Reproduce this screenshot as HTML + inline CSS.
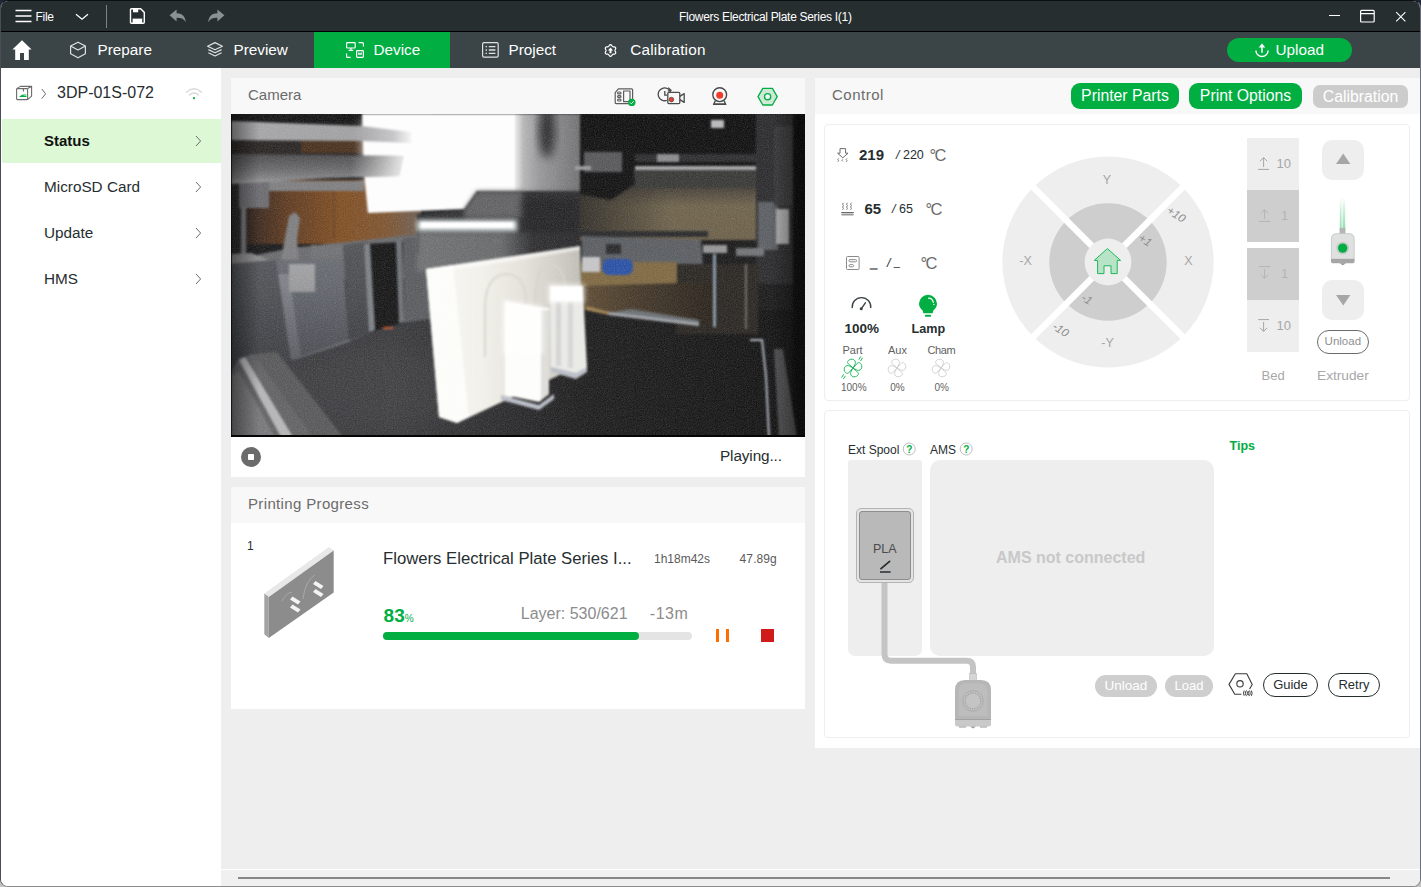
<!DOCTYPE html>
<html lang="en">
<head>
<meta charset="utf-8">
<title>Flowers Electrical Plate Series I(1)</title>
<style>
*{box-sizing:border-box;margin:0;padding:0}
html,body{width:1421px;height:887px;overflow:hidden;background:linear-gradient(#1d2536 0,#1d2536 50%,#c4c4c4 50%,#c4c4c4 100%);font-family:"Liberation Sans",sans-serif;color:#262e30}
.abs,.abs>*{position:absolute}
#win{position:absolute;left:0;top:0;width:1421px;height:887px;border-radius:8px;overflow:hidden;background:#eeeeee;border:1px solid #000;border-color:#0b0e12 #6d7078 #8c8c8c #4a4d58}
#win>*{position:absolute}
/* title bar */
#title{left:0;top:0;width:1419px;height:30px;background:#262e30;color:#fff}
#title>*{position:absolute}
#title .t{left:678px;top:8px;white-space:nowrap;font-size:12px;line-height:16px;letter-spacing:-.3px}
#tline{left:0;top:30px;width:1419px;height:1px;background:#000}
/* tab bar */
#tabs{left:0;top:31px;width:1419px;height:36px;background:#3b4446;color:#fff}
#tabs>*{position:absolute}
.tab{top:0;height:36px;font-size:15.3px;line-height:36px;white-space:nowrap}
.tab span{position:absolute;top:0}
.tab svg{position:absolute}
#tabdev{left:313px;width:136px;background:#00ae42}
#upload{left:1226px;top:6px;width:125px;height:24px;border-radius:12px;background:#00ae42;font-size:15.3px;line-height:24px}
/* sidebar */
#side{left:0;top:67px;width:220px;height:819px;background:#fff}
#side>*{position:absolute}
.srow{left:0;width:219px;height:44px;font-size:15.3px;line-height:44px;color:#262e30}
.srow span{position:absolute;left:43px;top:0}
.srow svg{position:absolute;left:194px;top:16px}
/* panels */
.hdr{background:#f8f8f8;color:#6b6b6b;font-size:15px;line-height:36px;height:36px}
.hdr>span{position:absolute;left:17px;top:-1px;white-space:nowrap}
.white{background:#fff}
.gbtn{position:absolute;height:24px;border-radius:12px;background:#00ae42;color:#fff;font-size:15.8px;line-height:24px;text-align:center;white-space:nowrap}
.box{border:1px solid #eeeeee;border-radius:4px;background:#fff}

#cp span{white-space:nowrap}
.tb{font-size:15px;line-height:20px;font-weight:bold;color:#262e30}
.tb13{font-size:13.500px;line-height:18px;font-weight:bold;color:#262e30}
.ts{font-size:12.500px;line-height:18px;color:#262e30}
.ts i{font-style:italic}
.tc{font-size:16.5px;line-height:22px;color:#6b6b6b;letter-spacing:-1.7px}
.fl{font-size:11px;line-height:14px;color:#5f5f5f}
.bn{font-size:13px;line-height:18px}
.cl{font-size:14px;line-height:18px;color:#a8a8a8}
.al{font-size:12px;line-height:16px;color:#262e30}
.pill{border-radius:12px;font-size:13px;text-align:center;white-space:nowrap}
.pill.ol{border:1px solid #262e30;color:#262e30;line-height:21.500px}
</style>
</head>
<body>
<div id="win">

<!-- ============ TITLE BAR ============ -->
<div id="title">
  <svg style="left:14px;top:8px" width="18" height="14" viewBox="0 0 18 14"><path d="M0.5 1.4H16.5M0.5 7H16.5M0.5 12.6H16.5" stroke="#fff" stroke-width="1.5" fill="none"/></svg>
  <div style="left:34.5px;top:8px;font-size:12px;line-height:16px;letter-spacing:-.3px">File</div>
  <svg style="left:74px;top:12px" width="14" height="8" viewBox="0 0 14 8"><path d="M1 1.2L7 6.2L13 1.2" stroke="#fff" stroke-width="1.3" fill="none"/></svg>
  <div style="left:105px;top:4px;width:1px;height:23px;background:#7d8385"></div>
  <!-- save -->
  <svg style="left:128px;top:6px" width="18" height="18" viewBox="0 0 18 18"><path d="M2.6 1.7H11.6L15.3 5.4V15.2Q15.3 16.3 14.2 16.3H2.6Q1.5 16.3 1.5 15.2V2.8Q1.5 1.7 2.6 1.7Z" fill="none" stroke="#fff" stroke-width="1.4"/><rect x="4" y="1.7" width="5.2" height="3.6" fill="#fff"/><rect x="3.6" y="11.6" width="9.6" height="4.7" fill="#fff"/></svg>
  <!-- undo -->
  <svg style="left:167.500px;top:8px" width="18" height="14" viewBox="0 0 18 14"><path d="M0.6 6.2L7.6 0.6V4.2C13 4.2 16.4 7.4 16.8 13.2C15 9.8 12 8.6 7.6 8.8V12.4Z" fill="#8b9193"/></svg>
  <!-- redo -->
  <svg style="left:205.500px;top:8px" width="18" height="14" viewBox="0 0 18 14"><path d="M17.4 6.2L10.4 0.6V4.2C5 4.2 1.6 7.4 1.2 13.2C3 9.8 6 8.6 10.4 8.8V12.4Z" fill="#8b9193"/></svg>
  <div class="t">Flowers Electrical Plate Series I(1)</div>
  <!-- window controls -->
  <div style="left:1328px;top:14px;width:11px;height:1.3px;background:#fff"></div>
  <svg style="left:1358px;top:8px" width="17" height="15" viewBox="0 0 17 15"><rect x="1.6" y="1.4" width="13.6" height="11.6" rx="1" fill="none" stroke="#fff" stroke-width="1.2"/><path d="M1.6 4.6H15.2" stroke="#fff" stroke-width="1.2"/></svg>
  <svg style="left:1394px;top:10px" width="12" height="12" viewBox="0 0 12 12"><path d="M1.2 1.2L10.4 10.4M10.4 1.2L1.2 10.4" stroke="#fff" stroke-width="1.1"/></svg>
</div>
<div id="tline"></div>

<!-- ============ TAB BAR ============ -->
<div id="tabs">
  <!-- home -->
  <svg style="left:10px;top:7px" width="22" height="22" viewBox="0 0 22 22"><path d="M11 1.2L20.6 10.4H17.8V21H13V14H9V21H4.2V10.4H1.4Z" fill="#fff"/></svg>
  <div class="tab" id="tabprep" style="left:51px;width:127px">
    <svg style="left:17px;top:9px" width="18" height="18" viewBox="0 0 18 18"><path d="M9 1.2L16.4 5V12.8L9 16.8L1.6 12.8V5Z M1.6 5L9 9L16.4 5" fill="none" stroke="#dfe2e3" stroke-width="1.2" stroke-linejoin="round"/></svg>
    <span style="left:45.5px">Prepare</span></div>
  <div class="tab" id="tabprev" style="left:178px;width:135px">
    <svg style="left:27px;top:9px" width="18" height="18" viewBox="0 0 18 18"><path d="M9 1.6L16.4 5.2L9 8.8L1.6 5.2Z M2.4 8.6L9 11.8L15.6 8.6 M2.4 11.8L9 15L15.6 11.8" fill="none" stroke="#dfe2e3" stroke-width="1.2" stroke-linejoin="round"/></svg>
    <span style="left:54.5px">Preview</span></div>
  <div class="tab" id="tabdev">
    <svg style="left:31px;top:9px" width="20" height="18" viewBox="0 0 20 18"><g fill="none" stroke="#fff" stroke-width="1.2"><rect x="1.6" y="1.6" width="8.6" height="5.4" rx=".8"/><path d="M5.9 7V9.2M3.6 9.4H8.2"/><path d="M13.6 1.6H17.4Q18.4 1.6 18.4 2.6V5.4"/><path d="M1.6 12.6V15.4Q1.6 16.4 2.6 16.4H5.6"/><rect x="11.6" y="9.6" width="6.8" height="6.8" rx=".8"/><path d="M13.8 11.4V13.2H16.2V11.4"/></g></svg>
    <span style="left:59.5px">Device</span></div>
  <div class="tab" id="tabproj" style="left:449px;width:136px">
    <svg style="left:31px;top:9px" width="19" height="18" viewBox="0 0 19 18"><rect x="1.6" y="1.6" width="15.6" height="14.6" rx="1.4" fill="none" stroke="#dfe2e3" stroke-width="1.2"/><path d="M4.6 5.6H6M7.8 5.6H14.4M4.6 9H6M7.8 9H14.4M4.6 12.4H6M7.8 12.4H14.4" stroke="#dfe2e3" stroke-width="1.3"/></svg>
    <span style="left:58.5px">Project</span></div>
  <div class="tab" id="tabcal" style="left:585px;width:140px;letter-spacing:.2px">
    <svg style="left:17.400px;top:10.500px" width="15" height="15" viewBox="0 0 15 15"><path d="M7.50 1.65L8.00 1.77L8.46 2.08L8.83 2.53L9.14 2.99L9.42 3.38L9.72 3.65L10.11 3.78L10.59 3.82L11.14 3.86L11.71 3.96L12.22 4.20L12.57 4.57L12.72 5.07L12.67 5.62L12.47 6.17L12.23 6.67L12.03 7.10L11.95 7.50L12.03 7.90L12.23 8.33L12.47 8.83L12.67 9.38L12.72 9.93L12.57 10.42L12.22 10.80L11.71 11.04L11.14 11.14L10.59 11.18L10.11 11.22L9.73 11.35L9.42 11.62L9.14 12.01L8.83 12.47L8.46 12.92L8.00 13.23L7.50 13.35L7.00 13.23L6.54 12.92L6.17 12.47L5.86 12.01L5.58 11.62L5.27 11.35L4.89 11.22L4.41 11.18L3.86 11.14L3.29 11.04L2.78 10.80L2.43 10.43L2.28 9.93L2.33 9.38L2.53 8.83L2.77 8.33L2.97 7.90L3.05 7.50L2.97 7.10L2.77 6.67L2.53 6.17L2.33 5.62L2.28 5.07L2.43 4.58L2.78 4.20L3.29 3.96L3.86 3.86L4.41 3.82L4.89 3.78L5.28 3.65L5.58 3.38L5.86 2.99L6.17 2.53L6.54 2.08L7.00 1.77Z" fill="none" stroke="#fff" stroke-width="1.250" stroke-linejoin="round"/><path d="M7.500 4.400L10.100 7.400H8.500V10.300H6.500V7.400H4.900Z" fill="#fff"/></svg>
    <span style="left:44.300px">Calibration</span></div>
  <div id="upload">
    <svg style="position:absolute;left:27px;top:4px" width="16" height="16" viewBox="0 0 16 16"><path d="M8 10.800V4.500" stroke="#fff" stroke-width="1.500" fill="none"/><path d="M8 1.400L11.300 5.400H4.700Z" fill="#fff"/><path d="M1.900 8.400A6.100 6.100 0 0 0 14.100 8.400" fill="none" stroke="#fff" stroke-width="1.400"/></svg>
    <span style="position:absolute;left:48.5px;top:0">Upload</span></div>
</div>

<!-- ============ SIDEBAR ============ -->
<div id="side">
  <svg style="left:14px;top:17px" width="18" height="16" viewBox="0 0 18 16"><g fill="none" stroke="#6b6b6b" stroke-width="1.1" stroke-linejoin="round"><rect x="1.6" y="3.6" width="11" height="11" rx=".8"/><path d="M1.8 3.6L5.4 1.4H16.6V11.2L12.6 14.6M12.6 3.6L16.6 1.4M8.4 3.8V6.4"/></g><path d="M4 12L6.2 10.2Q7.2 9.4 8.4 9.4H11.4V10.4H8.6V11H11.4V12Z" fill="#00ae42"/></svg>
  <svg style="left:40px;top:19.500px" width="6" height="12" viewBox="0 0 6 12"><path d="M.8 1L4.6 5.8L.8 10.6" fill="none" stroke="#6b6b6b" stroke-width="1"/></svg>
  <div id="devname" style="left:56px;top:15px;font-size:16px;line-height:20px;white-space:nowrap">3DP-01S-072</div>
  <svg style="left:184px;top:19px" width="18" height="13" viewBox="0 0 18 13"><g fill="none" stroke="#d9d9d9" stroke-width="1.3" stroke-linecap="round"><path d="M1.4 5.2Q9 -1.6 16.6 5.2"/><path d="M4.4 8Q9 4 13.6 8"/></g><circle cx="9" cy="11.2" r="1.1" fill="#00ae42"/></svg>
  <div class="srow" style="top:51px;left:1px;width:219px;background:#dcf8d4;font-weight:bold;font-size:15px;color:#111"><span style="left:42px">Status</span><svg style="left:193px" width="7" height="12" viewBox="0 0 7 12"><path d="M1 1L5.6 6L1 11" fill="none" stroke="#6b6b6b" stroke-width="1"/></svg></div>
  <div class="srow" style="top:97px"><span>MicroSD Card</span><svg width="7" height="12" viewBox="0 0 7 12"><path d="M1 1L5.6 6L1 11" fill="none" stroke="#6b6b6b" stroke-width="1"/></svg></div>
  <div class="srow" style="top:143px"><span>Update</span><svg width="7" height="12" viewBox="0 0 7 12"><path d="M1 1L5.6 6L1 11" fill="none" stroke="#6b6b6b" stroke-width="1"/></svg></div>
  <div class="srow" style="top:189px"><span>HMS</span><svg width="7" height="12" viewBox="0 0 7 12"><path d="M1 1L5.6 6L1 11" fill="none" stroke="#6b6b6b" stroke-width="1"/></svg></div>
</div>

<!-- ============ CAMERA PANEL ============ -->
<div id="camhdr" class="hdr" style="left:230px;top:77px;width:574px"><span>Camera</span>
  <!-- sd card -->
  <svg style="position:absolute;left:382px;top:8.5px" width="24" height="20" viewBox="0 0 24 20"><g fill="none" stroke="#5c5c5c" stroke-width="1.2" stroke-linejoin="round"><path d="M5.4 1.8H18.6Q19.6 1.8 19.6 2.8V15.6Q19.6 16.6 18.6 16.6H3.2Q2.2 16.6 2.2 15.6V5.6Z"/><rect x="10.6" y="4" width="6.4" height="10.6"/><rect x="4.6" y="5" width="3.4" height="1.8" rx=".9"/><rect x="4.6" y="8.6" width="3.4" height="1.8" rx=".9"/><rect x="4.6" y="12.2" width="3.4" height="1.8" rx=".9"/></g><circle cx="18.800" cy="15.400" r="3.700" fill="#00ae42"/><path d="M17 15.500L18.300 16.800L20.600 14.300" fill="none" stroke="#fff" stroke-width="1"/></svg>
  <!-- timelapse -->
  <svg style="position:absolute;left:425px;top:7.5px" width="30" height="20" viewBox="0 0 30 20"><g fill="none" stroke="#4a4a4a" stroke-width="1.3"><path d="M10.800 14.300A6.400 6.400 0 1 1 14.600 6.200"/><path d="M12.200 1.600L14.900 4.300L11.800 5.200"/><path d="M8.800 5V9.200H11"/><rect x="11.800" y="6.400" width="12" height="11.200" rx="1"/><path d="M23.800 10.400L28.200 7.600V16.400L23.800 13.600" stroke-linejoin="round"/></g><circle cx="15.400" cy="13.600" r="2.300" fill="#ef3b2c" stroke="#4a4a4a" stroke-width=".8"/></svg>
  <!-- webcam -->
  <svg style="position:absolute;left:479px;top:7.5px" width="20" height="20" viewBox="0 0 20 20"><g fill="none" stroke="#4a4a4a" stroke-width="1.4"><circle cx="9.700" cy="8.700" r="6.900"/><path d="M5.400 14.400L3.800 18.300H15.600L14 14.400"/></g><path d="M3.400 18.300H16" stroke="#4a4a4a" stroke-width="1.500"/><circle cx="9.700" cy="9.300" r="3.500" fill="#ef3b2c"/></svg>
  <!-- hexagon -->
  <svg style="position:absolute;left:525px;top:7.5px" width="24" height="22" viewBox="0 0 24 22"><path d="M2 10.700L6.800 2.400H16.400L21.200 10.700L16.400 19H6.800Z" fill="#cfe9d7" stroke="#00ae42" stroke-width="1.300" stroke-linejoin="round"/><circle cx="11.600" cy="10.700" r="3.100" fill="#eef8f1" stroke="#00ae42" stroke-width="1.300"/></svg>
</div>
<div id="cam" style="left:230px;top:113px;width:574px;height:323px;background:#333">
<svg width="574" height="323" viewBox="0 0 574 323" style="position:absolute;left:0;top:0">
<defs>
  <filter color-interpolation-filters="sRGB" id="fb1" x="-5%" y="-5%" width="110%" height="110%"><feGaussianBlur stdDeviation="0.9"/></filter>
  <filter color-interpolation-filters="sRGB" id="fb2" x="-20%" y="-20%" width="140%" height="140%"><feGaussianBlur stdDeviation="2.2"/></filter>
  <filter color-interpolation-filters="sRGB" id="fb4" x="-30%" y="-30%" width="160%" height="160%"><feGaussianBlur stdDeviation="5"/></filter>
  <filter color-interpolation-filters="sRGB" id="fb9" x="-40%" y="-40%" width="180%" height="180%"><feGaussianBlur stdDeviation="12"/></filter>
  <filter color-interpolation-filters="sRGB" id="grain" x="0" y="0" width="100%" height="100%">
    <feTurbulence type="fractalNoise" baseFrequency="0.9" numOctaves="2" seed="7" result="n"/>
    <feColorMatrix in="n" type="matrix" values="0 0 0 0 1  0 0 0 0 1  0 0 0 0 1  0.9 0.9 0.9 0 -1.05"/>
  </filter>
  <linearGradient id="gFloor" x1="0" y1="0" x2="1" y2="0">
    <stop offset="0" stop-color="#363639"/><stop offset=".28" stop-color="#3b3b3e"/><stop offset=".5" stop-color="#29282a"/><stop offset=".62" stop-color="#1f1e1f"/><stop offset="1" stop-color="#141314"/>
  </linearGradient>
  <linearGradient id="gBeam1" x1="0" y1="0" x2="1" y2="0">
    <stop offset="0" stop-color="#a6a6a8"/><stop offset=".68" stop-color="#a0a0a2"/><stop offset=".9" stop-color="#c4c4c6"/><stop offset="1" stop-color="#f4f4f4"/>
  </linearGradient>
  <linearGradient id="gBeam2" x1="0" y1="0" x2="0" y2="1">
    <stop offset="0" stop-color="#4c4c4e"/><stop offset=".5" stop-color="#69696b"/><stop offset=".8" stop-color="#828284"/><stop offset="1" stop-color="#a2a2a4"/>
  </linearGradient>
  <linearGradient id="gPeg" x1="0" y1="0" x2="1" y2="0">
    <stop offset="0" stop-color="#2a211d"/><stop offset=".25" stop-color="#5e3b22"/><stop offset=".55" stop-color="#804f24"/><stop offset=".8" stop-color="#7e5430"/><stop offset="1" stop-color="#6e6056"/>
  </linearGradient>
  <linearGradient id="gFadeW" x1="0" y1="0" x2="1" y2="0">
    <stop offset="0" stop-color="#fff" stop-opacity="0"/><stop offset="1" stop-color="#fff" stop-opacity=".85"/>
  </linearGradient>
  <linearGradient id="gPlat" x1="0" y1="0" x2="1" y2="0">
    <stop offset="0" stop-color="#5e4c34"/><stop offset=".45" stop-color="#433729"/><stop offset="1" stop-color="#29231c"/>
  </linearGradient>
  <linearGradient id="gShadowL" x1="0" y1="0" x2="1" y2="0">
    <stop offset="0" stop-color="#2e2b27" stop-opacity=".9"/><stop offset="1" stop-color="#2e2b27" stop-opacity="0"/>
  </linearGradient>
  <linearGradient id="gVig" x1="0" y1="0" x2="1" y2="0">
    <stop offset="0" stop-color="#000" stop-opacity=".45"/><stop offset=".05" stop-color="#000" stop-opacity="0"/><stop offset=".94" stop-color="#000" stop-opacity="0"/><stop offset="1" stop-color="#000" stop-opacity=".5"/>
  </linearGradient>
  <linearGradient id="gCyl" x1="0" y1="0" x2="1" y2="0">
    <stop offset="0" stop-color="#e8e8e8"/><stop offset=".2" stop-color="#b4b4b5"/><stop offset=".4" stop-color="#98989a"/><stop offset="1" stop-color="#6e6e70"/>
  </linearGradient>
  <linearGradient id="gW2" x1="0" y1="0" x2="1" y2="0">
    <stop offset="0" stop-color="#fdfdfd"/><stop offset="1" stop-color="#fdfdfd" stop-opacity="0"/>
  </linearGradient>
  <linearGradient id="gUnder" x1="0" y1="0" x2="1" y2="0">
    <stop offset="0" stop-color="#707173"/><stop offset=".5" stop-color="#68696b"/><stop offset=".68" stop-color="#2e2e30"/><stop offset="1" stop-color="#2a2a2c"/>
  </linearGradient>
  <linearGradient id="gWall" x1="0" y1="0" x2="1" y2="0">
    <stop offset="0" stop-color="#f8f7f3"/><stop offset=".35" stop-color="#f1f0ea"/><stop offset=".62" stop-color="#e3e1d9"/><stop offset=".85" stop-color="#cdcbc2"/><stop offset="1" stop-color="#bcbab1"/>
  </linearGradient>
  <linearGradient id="gDarkV" x1="0" y1="0" x2="0" y2="1">
    <stop offset="0" stop-color="#1a1c20" stop-opacity="0"/><stop offset=".35" stop-color="#1a1c20" stop-opacity=".12"/><stop offset="1" stop-color="#1a1c20" stop-opacity=".5"/>
  </linearGradient>
  <linearGradient id="gSlab" x1="0" y1="0" x2="1" y2="0">
    <stop offset="0" stop-color="#fbfaf4"/><stop offset=".5" stop-color="#f1efe6"/><stop offset="1" stop-color="#dcdad2"/>
  </linearGradient>
  <linearGradient id="gTan" x1="0" y1="0" x2="0" y2="1">
    <stop offset="0" stop-color="#48423a"/><stop offset=".35" stop-color="#6e634c"/><stop offset="1" stop-color="#6c604a"/>
  </linearGradient>
</defs>
<rect width="574" height="323" fill="#1b1b1c"/>
<g filter="url(#fb1)">
  <!-- ===== floor ===== -->
  <rect x="0" y="196" width="574" height="127" fill="url(#gFloor)"/>
  <ellipse cx="140" cy="272" rx="110" ry="40" fill="#48484b" opacity=".4" filter="url(#fb9)"/>
  <!-- ===== top-left: beams + pegboard ===== -->
  <rect x="0" y="0" width="135" height="8" fill="#151515"/>
  <rect x="0" y="24" width="140" height="18" fill="#2a2624"/>
  <rect x="70" y="27" width="65" height="12" fill="#4a321e"/>
  <rect x="10" y="66" width="180" height="64" fill="url(#gPeg)"/>
  <rect x="102" y="74" width="2" height="50" fill="#6a4424"/>
  <rect x="0" y="66" width="16" height="80" fill="#262628"/>
  <rect x="8" y="66" width="30" height="28" fill="#6c6c70"/>
  <rect x="10" y="92" width="5" height="48" fill="#77777a"/>
  <rect x="38" y="67" width="95" height="10" fill="#7e7e80"/>
  <!-- grey counter strip -->
  <polygon points="0,146 60,134 180,121 190,121 190,165 0,165" fill="#696a6d"/>
  <polygon points="0,140 20,139 38,146 0,150" fill="#8c8c8e"/>
  <!-- lever -->
  <polygon points="58,102 64,98 69,104 66,126 68,146 50,146 54,124" fill="#7e7e80"/>
  <!-- small light cylinder -->
  <rect x="90" y="133" width="9" height="8" rx="3" fill="#dfe6ee"/>
  <!-- ===== left wall + grey pillars ===== -->
  <polygon points="0,150 48,146 48,162 60,246 0,262" fill="#5a5c61"/>
  <polygon points="0,150 48,146 56,244 22,240 0,250" fill="#56585d"/>
  <polygon points="45,147 112,143 118,228 62,246" fill="#6c6f76"/>
  <polygon points="47,160 58,160 70,242 60,246" fill="#888b92"/>
  <rect x="58" y="150" width="26" height="28" fill="#a9a9ab"/>
  <polygon points="112,131 136,128 140,218 118,228" fill="#525357"/>
  <rect x="80" y="131" width="32" height="16" fill="#707174"/>
  <polygon points="0,150 120,140 200,125 200,205 140,218 60,246 0,262" fill="url(#gDarkV)"/>
  <!-- dark opening -->
  <polygon points="133,130 172,128 172,208 142,217" fill="#171718"/>
  <polygon points="133,130 139,130 144,216 138,218" fill="#7c8085"/>
  <polygon points="165,128 171,128 173,208 168,209" fill="#6e7277"/>
  <polygon points="172,124 198,122 200,205 173,209" fill="#5a5b5e"/>
  <rect x="152" y="213" width="10" height="2" fill="#c8552a"/>
  <!-- bottom-left curved rail -->
  <polygon points="20,240 46,238 112,323 80,323" fill="#58585a"/>
  <polygon points="0,258 8,244 22,240 82,323 0,323" fill="#626265"/>
  <polygon points="8,246 14,243 62,323 50,323" fill="#b4b4b6"/>
  <polygon points="0,262 8,258 44,323 0,323" fill="#77777a"/>
  <!-- ===== white blown-out area ===== -->
  <rect x="278" y="0" width="74" height="79" fill="url(#gCyl)"/>
  <polygon points="131,0 284,0 284,77 246,77 233,95 137,99 133,60" fill="#fdfdfd"/>
  <rect x="276" y="0" width="16" height="77" fill="url(#gW2)"/>
  <polygon points="131,6 200,4 200,66 131,64" fill="#fdfdfd" opacity=".75" filter="url(#fb4)"/>
  <polygon points="0,7 130,12 180,18 180,29 130,27 0,26" fill="url(#gBeam1)"/>
  <polygon points="0,40 172,42 168,62 100,64 0,70" fill="url(#gBeam2)"/>
  <polygon points="120,42 172,42 168,62 120,63" fill="url(#gFadeW)"/>
  <ellipse cx="316" cy="17" rx="8" ry="27" fill="#2c2c2e" filter="url(#fb4)"/>
  <!-- under white: toolhead body -->
  <polygon points="246,77 350,77 350,140 186,140 186,100 233,96" fill="#323234"/>
  <polygon points="246,77 292,77 292,104 233,104 233,96" fill="#626264" filter="url(#fb2)"/>
  <rect x="292" y="82" width="58" height="54" fill="#252527" filter="url(#fb4)"/>
  <rect x="186" y="118" width="170" height="40" fill="url(#gUnder)" filter="url(#fb2)"/>
  <rect x="186" y="106" width="100" height="11" fill="#e4ecec" filter="url(#fb2)"/>
  <rect x="190" y="108" width="92" height="6" fill="#ffffff"/>
  <!-- ===== top-right: machine ===== -->
  <rect x="349" y="0" width="225" height="60" fill="#111112"/>
  <rect x="349" y="56" width="180" height="22" fill="#393937"/>
  <rect x="349" y="74" width="180" height="52" fill="url(#gTan)"/>
  <rect x="349" y="74" width="90" height="48" fill="url(#gShadowL)"/>
  <polygon points="349,20 400,24 404,70 380,86 349,80" fill="#131314"/>
  <rect x="353" y="38" width="38" height="20" fill="#58585a"/>
  <rect x="344" y="52" width="16" height="4" fill="#9a9a9c"/>
  <rect x="404" y="40" width="130" height="8" fill="#2e2e30"/>
  <rect x="426" y="40" width="22" height="8" fill="#8a8a8c"/>
  <rect x="404" y="52" width="136" height="4" fill="#a4a4a6"/>
  <rect x="480" y="6" width="13" height="8" fill="#b8b8ba"/>
  <!-- right column -->
  <rect x="525" y="0" width="49" height="170" fill="#2c2c2e"/>
  <rect x="527" y="88" width="20" height="48" fill="#5b5e62"/>
  <rect x="545" y="95" width="13" height="35" fill="#adadaf"/>
  <rect x="543" y="12" width="20" height="80" fill="#3a3a3c"/>
  <rect x="562" y="0" width="12" height="323" fill="#0c0c0d"/>
  <!-- bed plate -->
  <rect x="349" y="117" width="128" height="6" fill="#2a2a2c"/>
  <polygon points="351,122 470,126 472,152 351,150" fill="#5a5d61"/>
  <rect x="472" y="131" width="24" height="8" fill="#949496"/>
  <rect x="505" y="134" width="28" height="8" fill="#707274"/>
  <rect x="375" y="130" width="15" height="10" fill="#2a2a2c"/>
  <!-- below bed: cardboard + platform -->
  <rect x="445" y="150" width="82" height="70" fill="#2a2723"/>
  <rect x="350" y="148" width="96" height="28" fill="#7e6842"/>
  <polygon points="352,172 482,168 482,212 352,196" fill="url(#gPlat)"/>
  <polygon points="355,192 378,198 378,201 355,196" fill="#a08250"/>
  <polygon points="377,199 400,195 468,206 468,211" fill="#6b6f73"/>
  <polygon points="377,198 468,209 468,212 377,201" fill="#a2a6aa"/>
  <rect x="351" y="143" width="18" height="15" fill="#c4c4c6"/>
  <rect x="371" y="145" width="31" height="16" rx="7" fill="#2a50a4"/>
  <rect x="482" y="140" width="3" height="73" fill="#8796a6"/>
  <rect x="514" y="150" width="2" height="65" fill="#6a6a62"/>
  <!-- right floor edge -->
  <polyline points="519,226 531,226 535,262 538,323" fill="none" stroke="#a9b1bb" stroke-width="2"/>
  <polygon points="543,235 552,235 566,323 548,323" fill="#505052"/>
  <!-- ===== white printed parts ===== -->
  <polygon points="195,155 349,132 352,250 226,309 208,303" fill="url(#gWall)"/>
  <polygon points="195,155 222,151 238,303 226,309 208,303" fill="#fcfcf9"/>
  <polygon points="195,155 282,142.500 349,132 349,136 282,147 222,156" fill="#ffffff" opacity=".55"/>
  <path d="M254,243 V192 Q255,161 275,160 Q295,160 295,190 V200" fill="none" stroke="#d9d7cf" stroke-width="2.200"/>
  <path d="M304,196 V182 Q305,152 320,151 Q334,151 334,178" fill="none" stroke="#d4d2ca" stroke-width="2"/>
  <!-- second small piece (back) -->
  <polygon points="319,173 352,176 356,254 345,260 320,254" fill="#e9e9e6"/>
  <rect x="325" y="188" width="5" height="64" fill="#d3d3d1"/>
  <rect x="337" y="188" width="5" height="66" fill="#d5d5d3"/>
  <polygon points="320,253 345,259 356,253 356,258 345,265 320,258" fill="#b8bcc4"/>
  <rect x="319" y="172" width="33" height="15" fill="#ffffff"/>
  <rect x="317" y="170" width="37" height="19" fill="#ffffff" opacity=".6" filter="url(#fb2)"/>
  <!-- front small piece -->
  <polygon points="274,187 310,193.500 318,194 318,280 308,288 274,281" fill="#fdfdfb"/>
  <polygon points="310,196 318,196 318,280 310,286" fill="#dddcd8"/>
  <polygon points="272,186 312,192 312,240 272,240" fill="#ffffff" opacity=".7" filter="url(#fb2)"/>
  <polygon points="270,281 308,291 323,280 323,285 308,296 270,286" fill="#b9bdc6"/>
</g>
<rect width="574" height="323" filter="url(#grain)" opacity=".16"/>
<rect width="574" height="323" fill="url(#gVig)"/>
<rect x="0" y="321" width="574" height="2" fill="#050505"/>
<rect x="0" y="0" width="1" height="323" fill="#050505" opacity=".6"/>
</svg>
</div>
<div id="camft" class="white" style="left:230px;top:436px;width:574px;height:40px">
  <div style="position:absolute;left:10px;top:10px;width:20px;height:20px;border-radius:10px;background:#6b6b6b"></div>
  <div style="position:absolute;left:16.800px;top:16.900px;width:6.400px;height:6.400px;border-radius:.8px;background:#fff"></div>
  <span id="playing" style="position:absolute;left:489px;top:9px;font-size:15.3px;line-height:20px;letter-spacing:-.1px;white-space:nowrap">Playing...</span>
</div>

<!-- ============ PRINTING PROGRESS ============ -->
<div id="pphdr" class="hdr" style="left:230px;top:486px;width:574px"><span style="letter-spacing:.35px">Printing Progress</span></div>
<div id="pp" class="white" style="left:230px;top:522px;width:574px;height:186px"><div class="abs" style="position:absolute;left:-1px;top:-1px;width:574px;height:186px">
  <span id="ppnum" style="left:17px;top:17px;font-size:12px;line-height:14px">1</span>
  <!-- thumbnail -->
  <svg style="left:29px;top:21px" width="82" height="100" viewBox="0 0 82 100"><polygon points="5.300,50.400 70,4 74.700,7.600 9.800,54" fill="#e8e8e8"/><polygon points="5.300,50.400 9.800,54 9.800,94.900 5.300,91.200" fill="#a3a3a3"/><polygon points="9.800,54 74.700,7.600 74.700,49.400 9.800,94.900" fill="#8c8c8c"/><g fill="#f4f4f4"><polygon points="31,56.500 33.500,53.500 41.500,58.500 39,61.500"/><polygon points="31,64.500 33.500,61.500 41.500,66.500 39,69.500"/><polygon points="54,41 56.500,38 64.500,43 62,46"/><polygon points="54,49 56.500,46 64.500,51 62,54"/></g><g fill="none" stroke="#b4b4b4" stroke-width=".7"><path d="M23 58Q27 50 33 49"/><path d="M44 56Q46 38 56 32"/></g></svg>
  <span id="pptitle" style="left:153px;top:26px;font-size:16.7px;line-height:22px;white-space:nowrap;color:#262e30">Flowers Electrical Plate Series I...</span>
  <span id="pptime" style="left:424px;top:29px;font-size:12px;line-height:16px;white-space:nowrap;color:#5a5a5a">1h18m42s</span>
  <span id="ppwt" style="left:509.600px;letter-spacing:.1px;top:29px;font-size:12px;line-height:16px;white-space:nowrap;color:#5a5a5a">47.89g</span>
  <span id="pppct" style="left:153.600px;top:83px;font-size:19px;line-height:22px;font-weight:bold;color:#00ae42;white-space:nowrap">83<span style="font-size:10px;font-weight:normal;position:static">%</span></span>
  <span id="pplayer" style="left:290.800px;top:81px;font-size:16px;line-height:22px;color:#8c8c8c;white-space:nowrap">Layer: 530/621</span>
  <span id="ppleft" style="letter-spacing:.5px;left:419.800px;top:81px;font-size:16px;line-height:22px;color:#8c8c8c;white-space:nowrap">-13m</span>
  <div style="left:153px;top:110px;width:309px;height:8px;border-radius:4px;background:#e4e4e4"></div>
  <div style="left:153px;top:110px;width:256px;height:8px;border-radius:4px;background:#00ae42"></div>
  <div style="left:486px;top:107.400px;width:3.100px;height:12.600px;background:#ff6f00"></div>
  <div style="left:496.300px;top:107.400px;width:3.100px;height:12.600px;background:#ff6f00"></div>
  <div style="left:530.600px;top:107.400px;width:13.100px;height:12.600px;background:#d01b1b"></div>
</div></div>

<!-- ============ CONTROL PANEL ============ -->
<div id="ctl" class="white" style="left:814px;top:77px;width:605px;height:670px"></div>
<div id="ctlhdr" class="hdr" style="left:814px;top:77px;width:605px"><span style="letter-spacing:.5px">Control</span>
  <div class="gbtn" id="bpp" style="left:256px;top:5px;width:108px;height:26px;line-height:26px;border-radius:9px">Printer Parts</div>
  <div class="gbtn" id="bpo" style="left:374px;top:5px;width:113px;height:26px;line-height:26px;border-radius:9px">Print Options</div>
  <div class="gbtn" id="bcal" style="left:498px;top:6.500px;width:95px;height:23.500px;line-height:23px;border-radius:7px;background:#cccccc">Calibration</div>
</div>
<div id="box1" class="box" style="left:823px;top:123px;width:586px;height:277px"></div>
<div id="box2" class="box" style="left:823px;top:409px;width:586px;height:328px"></div>

<div id="cp" class="abs" style="left:-1px;top:-1px;width:1421px;height:887px">
  <!-- temperatures -->
  <svg style="left:836px;top:147px" width="14" height="16" viewBox="0 0 14 16"><g fill="none" stroke="#6b6b6b" stroke-width="1"><path d="M4 1.600H9.600V6.200H12L6.800 10.800L1.600 6.200H4Z" stroke-linejoin="round"/><path d="M2.600 11.400L1.800 12.600L2.600 13.600L1.800 14.800M6.800 12.400L6 13.400L6.800 14.400M11 11.400L10.200 12.600L11 13.600L10.200 14.800" stroke-width=".9"/></g></svg>
  <span id="t1a" class="tb" style="left:859px;top:145px">219</span>
  <span id="t1b" class="ts" style="left:896px;top:146px"><i>/</i> 220</span>
  <span id="t1c" class="tc" style="left:929.500px;top:143.500px">&#176;C</span>
  <svg style="left:840px;top:201px" width="15" height="16" viewBox="0 0 15 16"><g fill="none" stroke="#6b6b6b" stroke-width=".9"><path d="M3.400 1.800L2.600 3.200L3.400 4.600L2.600 6L3.400 7.400L2.600 8.800M7.400 1.800L6.600 3.200L7.400 4.600L6.600 6L7.400 7.400L6.600 8.800M11.400 1.800L10.600 3.200L11.400 4.600L10.600 6L11.400 7.400L10.600 8.800"/></g><rect x="1.200" y="11" width="12.600" height="1" fill="#6b6b6b"/><rect x="1.200" y="12.600" width="12.600" height="2" rx="1" fill="#9a9a9a"/></svg>
  <span id="t2a" class="tb" style="left:864.500px;top:199px">65</span>
  <span id="t2b" class="ts" style="left:892px;top:200px"><i>/</i> 65</span>
  <span id="t2c" class="tc" style="left:925.500px;top:197.500px">&#176;C</span>
  <svg style="left:845px;top:255px" width="16" height="16" viewBox="0 0 16 16"><g fill="none" stroke="#8a8a8a" stroke-width="1"><rect x="1.500" y="1.500" width="12.600" height="13" rx="1"/><rect x="4" y="4.600" width="7.600" height="2.200" rx="1.100"/><rect x="4" y="9.600" width="4.600" height="2.200" rx="1.100"/></g></svg>
  <span id="t3a" class="tb" style="left:869.800px;top:252px;font-size:14px;text-shadow:0 .9px 0 #262e30">_</span>
  <span id="t3b" class="ts" style="left:887px;top:254px"><i>/</i></span>
  <span id="t3d" class="ts" style="left:893.800px;top:253px;font-size:11px">_</span>
  <span id="t3c" class="tc" style="left:920.500px;top:251.500px">&#176;C</span>

  <!-- speed + lamp -->
  <svg style="left:850px;top:294px" width="23" height="18" viewBox="0 0 23 18"><path d="M2.300 14.200A9.300 9.300 0 1 1 20.700 14.200" fill="none" stroke="#3a4244" stroke-width="1.300"/><path d="M4.700 13.800A6.900 6.900 0 0 1 18.300 13.800" fill="none" stroke="#3a4244" stroke-width=".7" opacity=".0"/><path d="M11 15.200L15.400 8.800" stroke="#3a4244" stroke-width="1.400" stroke-linecap="round"/><circle cx="11.200" cy="14.800" r="1.500" fill="#3a4244"/></svg>
  <span id="spd" class="tb13" style="left:844.500px;top:320px">100%</span>
  <svg style="left:917px;top:293px" width="22" height="26" viewBox="0 0 22 26"><path d="M11 1.800A9 9 0 0 1 20 10.800C20 14 18 15.800 16.400 17.600L15.600 20.200H6.400L5.600 17.600C4 15.800 2 14 2 10.800A9 9 0 0 1 11 1.800Z" fill="#00ae42"/><rect x="7.800" y="21.800" width="6.400" height="2" rx="1" fill="#00ae42"/><path d="M11.600 5.200Q15.400 5.400 16.400 9.400" fill="none" stroke="#fff" stroke-width="1.200" stroke-linecap="round"/><circle cx="16.800" cy="11.400" r=".7" fill="#fff"/></svg>
  <span id="lamp" class="tb13" style="left:911.500px;top:320px;font-size:12.6px">Lamp</span>

  <!-- fans -->
  <span id="f1l" class="fl" style="left:842.500px;top:343px">Part</span>
  <span id="f2l" class="fl" style="left:888px;top:343px">Aux</span>
  <span id="f3l" class="fl" style="left:927.500px;top:343px;letter-spacing:-.4px">Cham</span>
  <svg style="left:841px;top:355.500px" width="24" height="24" viewBox="-2 -2 24 24"><g fill="none" stroke="#1fb85a" stroke-width="0.9" stroke-linejoin="round"><path d="M10 10L7 4.400C6 2.200 8.400 .8 10.600 1C13.400 1.300 14.800 3.400 14.200 5.400C13.800 6.800 12.400 8 10 10Z" transform="rotate(-20 10 10)"/><path d="M10 10L7 4.400C6 2.200 8.400 .8 10.600 1C13.400 1.300 14.800 3.400 14.200 5.400C13.800 6.800 12.400 8 10 10Z" transform="rotate(70 10 10)"/><path d="M10 10L7 4.400C6 2.200 8.400 .8 10.600 1C13.400 1.300 14.800 3.400 14.200 5.400C13.800 6.800 12.400 8 10 10Z" transform="rotate(160 10 10)"/><path d="M10 10L7 4.400C6 2.200 8.400 .8 10.600 1C13.400 1.300 14.800 3.400 14.200 5.400C13.800 6.800 12.400 8 10 10Z" transform="rotate(250 10 10)"/></g><g stroke="#00ae42" stroke-width=".9"><path d="M15.800 1.600L17.800 -1.600M17.600 3L19.600 -.2M.6 16.400L-1.400 19.600M2.400 17.800L.4 21"/></g></svg>
  <svg style="left:887px;top:357.800px" width="20" height="20" viewBox="0 0 20 20"><g fill="none" stroke="#cbcbcb" stroke-width="0.8" stroke-linejoin="round"><path d="M10 10L7 4.400C6 2.200 8.400 .8 10.600 1C13.400 1.300 14.800 3.400 14.200 5.400C13.800 6.800 12.400 8 10 10Z" transform="rotate(-20 10 10)"/><path d="M10 10L7 4.400C6 2.200 8.400 .8 10.600 1C13.400 1.300 14.800 3.400 14.200 5.400C13.800 6.800 12.400 8 10 10Z" transform="rotate(70 10 10)"/><path d="M10 10L7 4.400C6 2.200 8.400 .8 10.600 1C13.400 1.300 14.800 3.400 14.200 5.400C13.800 6.800 12.400 8 10 10Z" transform="rotate(160 10 10)"/><path d="M10 10L7 4.400C6 2.200 8.400 .8 10.600 1C13.400 1.300 14.800 3.400 14.200 5.400C13.800 6.800 12.400 8 10 10Z" transform="rotate(250 10 10)"/></g></svg>
  <svg style="left:931px;top:357.800px" width="20" height="20" viewBox="0 0 20 20"><g fill="none" stroke="#cbcbcb" stroke-width="0.8" stroke-linejoin="round"><path d="M10 10L7 4.400C6 2.200 8.400 .8 10.600 1C13.400 1.300 14.800 3.400 14.200 5.400C13.800 6.800 12.400 8 10 10Z" transform="rotate(-20 10 10)"/><path d="M10 10L7 4.400C6 2.200 8.400 .8 10.600 1C13.400 1.300 14.800 3.400 14.200 5.400C13.800 6.800 12.400 8 10 10Z" transform="rotate(70 10 10)"/><path d="M10 10L7 4.400C6 2.200 8.400 .8 10.600 1C13.400 1.300 14.800 3.400 14.200 5.400C13.800 6.800 12.400 8 10 10Z" transform="rotate(160 10 10)"/><path d="M10 10L7 4.400C6 2.200 8.400 .8 10.600 1C13.400 1.300 14.800 3.400 14.200 5.400C13.800 6.800 12.400 8 10 10Z" transform="rotate(250 10 10)"/></g></svg>
  <span id="f1v" class="fl" style="margin-top:1px;left:841px;top:380px;font-size:10px">100%</span>
  <span id="f2v" class="fl" style="margin-top:1px;left:890.300px;top:380px;font-size:10px">0%</span>
  <span id="f3v" class="fl" style="margin-top:1px;left:934.500px;top:380px;font-size:10px">0%</span>

  <!-- jog wheel -->
  <svg style="left:999.600px;top:154.300px" width="216" height="216" viewBox="-108 -108 216 216">
    <circle r="105.600" fill="#eeeeee"/><circle r="58.700" fill="#cecece"/>
    <path d="M-80 -80L80 80M80 -80L-80 80" stroke="#fff" stroke-width="6.500"/>
    <circle r="23.400" fill="#eeeeee"/>
    <path d="M-.6 -13.400L12.600 -1.600H9.200V11.600H3V3.800H-4V11.600H-10.400V-1.600H-13.800Z" fill="#b7e3c6" stroke="#1fb85a" stroke-width="1" stroke-linejoin="round"/>
    <g font-family="Liberation Sans, sans-serif" font-size="12.500" fill="#a6a6a6" text-anchor="middle">
      <text x="-1" y="-78.500">Y</text><text x="-.5" y="84.500">-Y</text><text x="-82.500" y="3">-X</text><text x="80.500" y="3">X</text>
    </g>
    <g font-family="Liberation Sans, sans-serif" font-size="11.500" font-style="italic" fill="#8c8c8c" text-anchor="middle">
      <text transform="translate(66.100,-44.400) rotate(33)">+10</text>
      <text transform="translate(35.100,-18.600) rotate(33)">+1</text>
      <text transform="translate(-23.200,40.400) rotate(33)">-1</text>
      <text transform="translate(-49.400,70.900) rotate(33)">-10</text>
    </g>
  </svg>

  <!-- bed -->
  <div style="left:1247px;top:138px;width:52px;height:51.800px;background:#eeeeee"></div>
  <div style="left:1247px;top:189.800px;width:52px;height:52px;background:#cecece"></div>
  <div style="left:1247px;top:248px;width:52px;height:52px;background:#cecece"></div>
  <div style="left:1247px;top:300px;width:52px;height:51.600px;background:#eeeeee"></div>
  <svg style="left:1257px;top:156px" width="13" height="15" viewBox="0 0 13 15"><path d="M6.600 11V1.800M3 5.200L6.600 1.600L10.200 5.200M1.200 13.400H12" fill="none" stroke="#a6a6a6" stroke-width="1"/></svg>
  <svg style="left:1258px;top:208.400px" width="13" height="15" viewBox="0 0 13 15"><path d="M6.600 11V1.800M3 5.200L6.600 1.600L10.200 5.200M1.200 13.400H12" fill="none" stroke="#b4b4b4" stroke-width="1"/></svg>
  <svg style="left:1258px;top:265px" width="13" height="15" viewBox="0 0 13 15"><path d="M6.600 4V13.200M3 9.800L6.600 13.400L10.200 9.800M1.200 1.600H12" fill="none" stroke="#b4b4b4" stroke-width="1"/></svg>
  <svg style="left:1257px;top:317.600px" width="13" height="15" viewBox="0 0 13 15"><path d="M6.600 4V13.200M3 9.800L6.600 13.400L10.200 9.800M1.200 1.600H12" fill="none" stroke="#a6a6a6" stroke-width="1"/></svg>
  <span id="b1" class="bn" style="left:1276.500px;top:155px;color:#a6a6a6">10</span>
  <span id="b2" class="bn" style="left:1281px;top:207px;color:#b4b4b4">1</span>
  <span id="b3" class="bn" style="left:1281px;top:265px;color:#b4b4b4">1</span>
  <span id="b4" class="bn" style="left:1276.500px;top:317px;color:#a6a6a6">10</span>
  <span id="bedl" class="cl" style="left:1261.500px;top:367px;font-size:13px">Bed</span>

  <!-- extruder -->
  <div style="left:1322.200px;top:140.300px;width:42px;height:39.700px;border-radius:10px;background:#eeeeee"></div>
  <svg style="left:1335px;top:153px" width="16" height="12" viewBox="0 0 16 12"><path d="M8.200 .6L15.400 11H1Z" fill="#a6a6a6"/></svg>
  <div style="left:1322.200px;top:280.200px;width:42px;height:39.700px;border-radius:10px;background:#eeeeee"></div>
  <svg style="left:1335px;top:294px" width="16" height="12" viewBox="0 0 16 12"><path d="M8.200 11.400L15.400 1H1Z" fill="#a6a6a6"/></svg>
  <svg style="left:1328px;top:195px" width="30" height="72" viewBox="0 0 30 72">
    <defs><linearGradient id="gFil" x1="0" y1="0" x2="0" y2="1"><stop offset="0" stop-color="#a8e4bf" stop-opacity="0"/><stop offset=".5" stop-color="#a8e4bf" stop-opacity=".7"/><stop offset="1" stop-color="#86d9a6"/></linearGradient></defs>
    <rect x="11.800" y="2" width="5.400" height="34" fill="url(#gFil)"/>
    <rect x="13.400" y="2" width="1.600" height="34" fill="#fff" opacity=".55"/>
    <rect x="11.600" y="33" width="5.800" height="7" fill="#b4b4b4"/>
    <path d="M3.400 64V44Q3.400 38.600 8.800 38.600H20.800Q26.200 38.600 26.200 44V64Z" fill="#dfe0e0" stroke="#c4c4c4" stroke-width=".8"/>
    <path d="M3 64H26.600V66.600Q26.600 68.200 25 68.200H4.600Q3 68.200 3 66.600Z" fill="#a6a6a6"/>
    <path d="M11.600 68.200H18L14.800 70.200Z" fill="#909090"/>
    <circle cx="14.700" cy="53.100" r="6.400" fill="#c9cbcb"/><circle cx="14.700" cy="53.100" r="4.700" fill="#00ae42"/>
  </svg>
  <div id="unl" style="left:1317px;top:330.300px;width:51.700px;height:23.500px;border-radius:12px;border:1px solid #6b6b6b;font-size:11.500px;line-height:21px;text-align:center;color:#909090">Unload</div>
  <span id="extl" class="cl" style="left:1317px;top:367px;font-size:13.700px">Extruder</span>

  <!-- AMS -->
  <span id="exts" class="al" style="left:848px;top:442px">Ext Spool</span>
  <svg style="left:902px;top:442px" width="15" height="15" viewBox="0 0 15 15"><circle cx="7.200" cy="7" r="6" fill="#fff" stroke="#b8b8b8" stroke-width=".9"/><text x="7.200" y="10.600" font-family="Liberation Sans, sans-serif" font-size="10" font-weight="bold" fill="#00ae42" text-anchor="middle">?</text></svg>
  <span id="amsl" class="al" style="left:930px;top:442px">AMS</span>
  <svg style="left:958.500px;top:442px" width="15" height="15" viewBox="0 0 15 15"><circle cx="7.200" cy="7" r="6" fill="#fff" stroke="#b8b8b8" stroke-width=".9"/><text x="7.200" y="10.600" font-family="Liberation Sans, sans-serif" font-size="10" font-weight="bold" fill="#00ae42" text-anchor="middle">?</text></svg>
  <div style="left:848px;top:459.700px;width:73.700px;height:196.300px;border-radius:3px 3px 7px 7px;background:#eeeeee"></div>
  <div style="left:930px;top:459.700px;width:283.800px;height:196.300px;border-radius:10px;background:#eeeeee"></div>
  <span id="amsn" style="left:996px;top:547px;font-size:16px;line-height:22px;font-weight:bold;color:#c8c8c8;white-space:nowrap">AMS not connected</span>
  <!-- tube -->
  <svg style="left:870px;top:575px" width="130" height="160" viewBox="870 575 130 160">
    <path d="M884.500 580V654Q884.500 660.700 891 660.700H966.500Q973 660.700 973 667V682" fill="none" stroke="#c4c4c4" stroke-width="6"/>
    <rect x="969.600" y="673.600" width="6.800" height="8" fill="#d6d6d6" stroke="#b8b8b8" stroke-width=".6"/>
    <path d="M955 719.500V690Q955 680 965 680H981Q991 680 991 690V719.500Z" fill="#b6b6b6"/>
    <path d="M955 719.500H991V724.600Q991 726.400 989.200 726.400H956.800Q955 726.400 955 724.600Z" fill="#c9c9c9"/>
    <rect x="955" y="719" width="36" height="1" fill="#a2a2a2"/>
    <path d="M959 726.400H966V727.600H959ZM980 726.400H987V727.600H980ZM970 726.400H976L973 728.400Z" fill="#9a9a9a"/>
    <path d="M958.500 716V691Q958.500 683.500 966 683.500H980Q987.500 683.500 987.500 691V716Z" fill="#bdbdbd"/>
    <circle cx="973" cy="701" r="10.200" fill="#c4c4c4" stroke="#a4a4a4" stroke-width=".8"/>
    <circle cx="973" cy="701" r="8" fill="none" stroke="#9c9c9c" stroke-width="1.600" stroke-dasharray=".8 1"/>
  </svg>
  <!-- spool slot -->
  <div style="left:856.400px;top:508px;width:57.400px;height:75px;border-radius:5px;border:1px solid #b4b4b4;background:#e4e4e4"></div>
  <div style="left:859.200px;top:511px;width:51.600px;height:69.400px;border-radius:3px;border:1px solid #8e8e8e;background:#b9b9b9"></div>
  <span id="pla" style="left:873px;top:540.500px;font-size:12.500px;line-height:16px;color:#4a4a4a;white-space:nowrap">PLA</span>
  <svg style="left:878px;top:558px" width="15" height="16" viewBox="0 0 15 16"><path d="M3 10.600L11.600 3.400" stroke="#262e30" stroke-width="1.800" stroke-linecap="round"/><path d="M2 14H12.600" stroke="#262e30" stroke-width="1.500"/></svg>

  <span id="tips" style="left:1229.500px;top:438px;font-size:12.500px;line-height:16px;font-weight:bold;color:#00ae42">Tips</span>
  <div id="aunl" class="pill" style="font-size:13.500px;left:1094.800px;top:674.800px;width:62.200px;height:21.800px;background:#cecece;color:#fff;line-height:21.500px">Unload</div>
  <div id="aload" class="pill" style="left:1165px;top:674.800px;width:48px;height:21.800px;background:#cecece;color:#fff;line-height:21.500px">Load</div>
  <svg style="left:1227px;top:671px" width="28" height="28" viewBox="0 0 28 28"><g fill="none" stroke="#3a3a3a" stroke-width="1.100" stroke-linejoin="round"><path d="M22.600 18L25.200 13.400L19.800 2.800H8.400L2 13.400L7.800 23.200H14.400"/><circle cx="13" cy="12.800" r="3.200"/><path d="M17.200 19.600Q15.800 22.200 17.200 24.800M24.400 19.600Q25.800 22.200 24.400 24.800" stroke-width="1"/><ellipse cx="19.400" cy="22.200" rx="1" ry="2.500" stroke-width=".9"/><ellipse cx="22.200" cy="22.200" rx="1" ry="2.500" stroke-width=".9"/></g></svg>
  <div id="guide" class="pill ol" style="left:1262.800px;top:672.700px;width:55.400px;height:23.900px">Guide</div>
  <div id="retry" class="pill ol" style="left:1327.800px;top:672.700px;width:52.400px;height:23.900px">Retry</div>
</div>

<!-- bottom scroll bar -->
<div style="left:220px;top:868px;width:1199px;height:18px;background:#f0f0f0;border-top:1px solid #fff"></div>
<div style="left:237px;top:876px;width:1152px;height:2px;background:#868686"></div>

</div>
</body>
</html>
